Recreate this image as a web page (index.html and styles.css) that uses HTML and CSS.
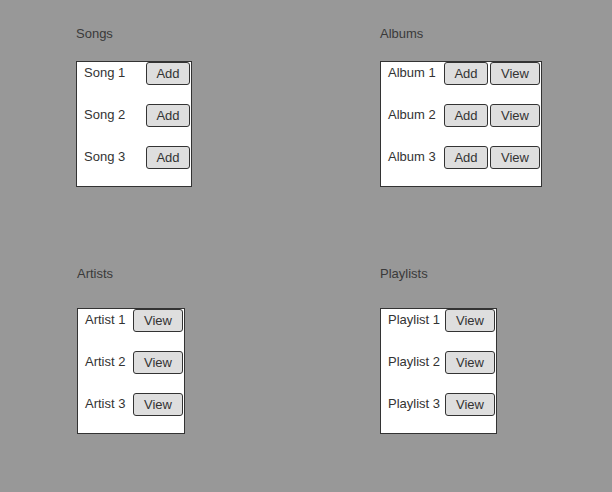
FILE: index.html
```html
<!DOCTYPE html>
<html>
<head>
<meta charset="utf-8">
<link rel="stylesheet" href="styles.css">
</head>
<body>
<div class="page">
  <section class="panel top">
    <h2 class="title">Songs</h2>
    <div class="box box-songs">
      <div class="row"><span class="label">Song 1</span><button class="btn btn-add">Add</button></div>
      <div class="row"><span class="label">Song 2</span><button class="btn btn-add">Add</button></div>
      <div class="row"><span class="label">Song 3</span><button class="btn btn-add">Add</button></div>
    </div>
  </section>
  <section class="panel top">
    <h2 class="title">Albums</h2>
    <div class="box box-albums">
      <div class="row"><span class="label">Album 1</span><button class="btn btn-add">Add</button><button class="btn btn-view">View</button></div>
      <div class="row"><span class="label">Album 2</span><button class="btn btn-add">Add</button><button class="btn btn-view">View</button></div>
      <div class="row"><span class="label">Album 3</span><button class="btn btn-add">Add</button><button class="btn btn-view">View</button></div>
    </div>
  </section>
  <section class="panel bottom shift">
    <h2 class="title">Artists</h2>
    <div class="box box-artists">
      <div class="row"><span class="label">Artist 1</span><button class="btn btn-view">View</button></div>
      <div class="row"><span class="label">Artist 2</span><button class="btn btn-view">View</button></div>
      <div class="row"><span class="label">Artist 3</span><button class="btn btn-view">View</button></div>
    </div>
  </section>
  <section class="panel bottom">
    <h2 class="title">Playlists</h2>
    <div class="box box-playlists">
      <div class="row"><span class="label">Playlist 1</span><button class="btn btn-view">View</button></div>
      <div class="row"><span class="label">Playlist 2</span><button class="btn btn-view">View</button></div>
      <div class="row"><span class="label">Playlist 3</span><button class="btn btn-view">View</button></div>
    </div>
  </section>
</div>
</body>
</html>
```
FILE: styles.css
```css
html, body {
  margin: 0;
  padding: 0;
  background: #989898;
  width: 612px;
  height: 492px;
  overflow: hidden;
}
body {
  font-family: "Liberation Sans", Arial, sans-serif;
  font-size: 13px;
  color: #333333;
}
.page {
  display: grid;
  grid-template-columns: 304px auto;
  align-items: start;
  padding: 26px 0 0 76px;
  row-gap: 79px;
}
.panel {
  display: flex;
  flex-direction: column;
  align-items: flex-start;
}
.shift {
  margin-left: 1px;
}
.title {
  margin: 0;
  font-size: 13px;
  font-weight: normal;
  line-height: 16px;
  color: #3a3a3a;
}
.top .title { margin-bottom: 19px; }
.bottom .title { margin-bottom: 26px; }
.box {
  box-sizing: border-box;
  background: #ffffff;
  border: 1px solid #333333;
  height: 126px;
  padding: 0 1px 0 7px;
  display: flex;
  flex-direction: column;
  gap: 19px;
}
.box-songs { width: 116px; }
.box-albums { width: 162px; }
.box-artists { width: 108px; }
.box-playlists { width: 117px; }
.row {
  display: flex;
  align-items: center;
  height: 23px;
  gap: 2px;
}
.label {
  flex: 1;
  white-space: nowrap;
  line-height: 16px;
  color: #333333;
  margin-top: -2px;
}
.btn {
  box-sizing: border-box;
  height: 23px;
  padding: 0;
  margin: 0;
  border: 1px solid #333333;
  border-radius: 3px;
  background: #dedede;
  font-family: "Liberation Sans", Arial, sans-serif;
  font-size: 13px;
  color: #333333;
  line-height: 20px;
  text-align: center;
}
.btn-add { width: 44px; }
.btn-view { width: 50px; }
```
